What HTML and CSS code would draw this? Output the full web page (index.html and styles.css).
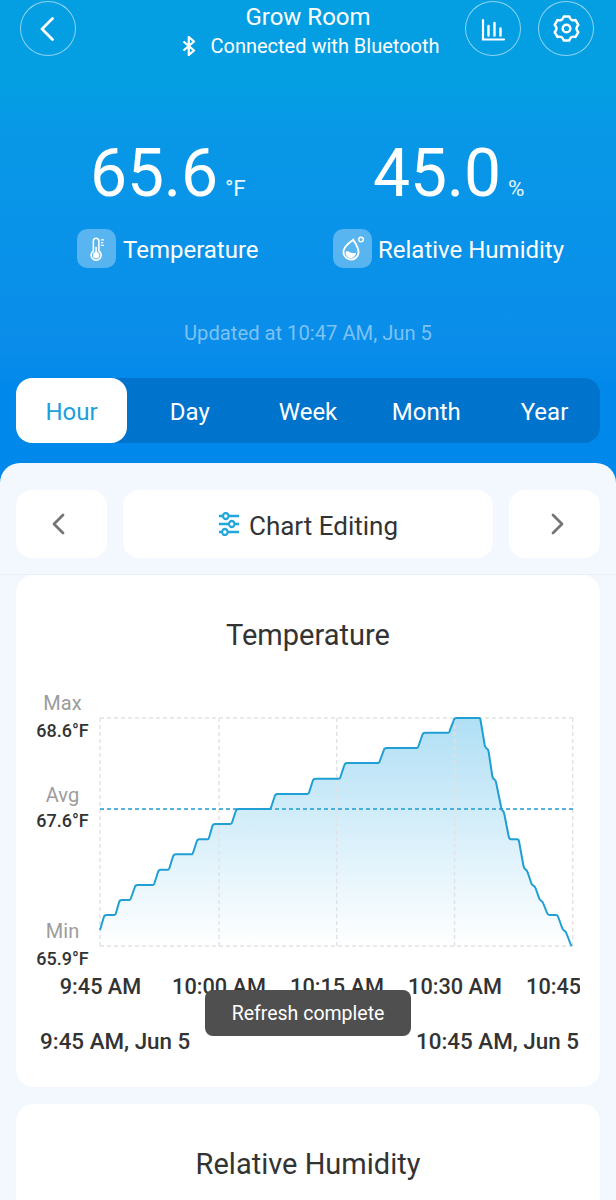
FILE: index.html
```html
<!DOCTYPE html>
<html lang="en">
<head>
<meta charset="utf-8">
<title>Grow Room</title>
<link rel="stylesheet" href="styles.css">
</head>
<body>
<div class="app">
  <header class="hero">
    <div class="topbar">
      <button class="round">
        <svg width="24" height="24" viewBox="0 0 24 24"><path d="M16.500 1.500 6 12l10.500 10.500" fill="none" stroke="#fff" stroke-width="2.800" stroke-linecap="round" stroke-linejoin="round"/></svg>
      </button>
      <div class="device">
        <div class="device-name">Grow Room</div>
        <div class="device-status">
          <svg width="14" height="20" viewBox="0 0 14 20"><path d="M1.500 5.500 12 14.500 6.800 19V1L12 5.500 1.500 14.500" fill="none" stroke="#fff" stroke-width="2.300" stroke-linejoin="round"/></svg>
          <span>Connected with Bluetooth</span>
        </div>
      </div>
      <div class="top-actions">
        <button class="round">
          <svg width="26" height="26" viewBox="0 0 26 26"><g fill="none" stroke="#fff" stroke-linecap="round"><path d="M3 4v19.500h21" stroke-width="2.200"/><path d="M8.500 10v9.500M14.500 7v12.500M20.500 12.500v7" stroke-width="2.400"/></g></svg>
        </button>
        <button class="round">
          <svg width="27" height="27" viewBox="0 0 24 24"><g fill="none" stroke="#fff" stroke-width="2.200" stroke-linejoin="round"><circle cx="12" cy="12" r="3.400"/><path d="M9.530 1.280H14.470Q15.600 5.760 20.040 4.500L22.520 8.780Q19.200 12 22.520 15.220L20.040 19.500Q15.600 18.240 14.470 22.720H9.530Q8.400 18.240 3.960 19.500L1.480 15.220Q4.800 12 1.480 8.780L3.960 4.500Q8.400 5.760 9.530 1.280z"/></g></svg>
        </button>
      </div>
    </div>

    <div class="readings">
      <div class="reading reading-temp">
        <div class="value"><span class="num">65.6</span><span class="unit">°F</span></div>
        <div class="label">
          <span class="tile"><svg width="19" height="24" viewBox="0 0 24 30"><g fill="none" stroke="#fff" stroke-width="2"><path d="M8 17.500V5a3.500 3.500 0 0 1 7 0v12.500a6.300 6.300 0 1 1-7 0z"/></g><circle cx="11.500" cy="22.800" r="4" fill="#fff"/><path d="M10.500 22V12h2v10z" fill="#fff"/><path d="M17.500 3.500h4M17.500 7h3M17.500 10.500h4" stroke="#fff" stroke-width="1.500"/></svg></span>
          <span class="label-text">Temperature</span>
        </div>
      </div>
      <div class="reading reading-hum">
        <div class="value"><span class="num">45.0</span><span class="unit">%</span></div>
        <div class="label">
          <span class="tile"><svg width="26" height="28" viewBox="0 0 26 28"><g transform="rotate(10 11 17)"><path d="M11 4.500C15 9 18.500 12 18.500 17a7.500 7.500 0 0 1-15 0C3.500 12 7 9 11 4.500z" fill="none" stroke="#fff" stroke-width="1.900"/><path d="M5.800 17.500c2.500-1.700 4.500.8 7 .3 1.300-.3 2.300-.8 3.400-1 0 3.500-2.300 6.300-5.200 6.300-3 0-5.200-2.500-5.200-5.600z" fill="#fff"/></g><circle cx="21" cy="4.500" r="2.300" fill="none" stroke="#fff" stroke-width="1.400"/></svg></span>
          <span class="label-text">Relative Humidity</span>
        </div>
      </div>
    </div>

    <div class="updated">Updated at 10:47 AM, Jun 5</div>

    <nav class="tabs">
      <span class="tab tab-active">Hour</span>
      <span class="tab">Day</span>
      <span class="tab">Week</span>
      <span class="tab">Month</span>
      <span class="tab">Year</span>
    </nav>
  </header>

  <main class="sheet">
    <div class="toolbar">
      <button class="tool tool-nav tool-prev"><svg width="16" height="24" viewBox="0 0 16 24"><path d="M13 3 4 12l9 9" fill="none" stroke="#757575" stroke-width="2.800" stroke-linecap="round" stroke-linejoin="round"/></svg></button>
      <button class="tool tool-main">
        <svg width="22" height="24" viewBox="0 0 24 24" preserveAspectRatio="none"><g fill="none" stroke="#21a6de" stroke-width="2.300"><path d="M1 4h4.500M11.500 4H23M1 12h11M18 12h5M1 20h3.500M10.500 20H23"/><circle cx="8.500" cy="4" r="3"/><circle cx="15" cy="12" r="3"/><circle cx="7.500" cy="20" r="3"/></g></svg>
        <span class="tool-text">Chart Editing</span>
      </button>
      <button class="tool tool-nav tool-next"><svg width="16" height="24" viewBox="0 0 16 24"><path d="M3 3l9 9-9 9" fill="none" stroke="#757575" stroke-width="2.800" stroke-linecap="round" stroke-linejoin="round"/></svg></button>
    </div>

    <section class="card card-first">
      <h2 class="card-title">Temperature</h2>
      <svg class="chart" width="564" height="324" viewBox="16 680 564 324">
        <defs>
          <linearGradient id="fill" x1="0" y1="718" x2="0" y2="946" gradientUnits="userSpaceOnUse">
            <stop offset="0" stop-color="#b0dff5"/>
            <stop offset="1" stop-color="#ffffff"/>
          </linearGradient>
        </defs>
        <path fill="url(#fill)" d="M100 930 105 915 115.700 915 120 900 130.700 900 135.700 885 154 885 159 869.700 169 869.700 174 854.300 192.700 854.300 197.700 839.300 208.700 839.300 213.300 824 231.700 824 236.700 809 270.700 809 275.700 794 308.700 794 313.700 778.700 340 778.700 345.300 763 379.300 763 384.700 748 418 748 423.300 732.700 449.300 732.700 454.700 718 480 718 485.300 748 488.300 750 492.700 778.700 495.700 781 501.700 809 504 812 509.300 839.300 518.700 839.300 524 869 527.300 871 531.700 885 535 887 539.300 900 542.700 902 548 915 557.700 915 562.700 930 566 932 571.700 946 100 946z"/>
        <g class="grid">
          <path d="M100 718H573M100 946H573M100 718V946M219 718V946M336.700 718V946M454.500 718V946M572.700 718V946"/>
        </g>
        <path class="avg" d="M100 809H573"/>
        <path class="line" d="M100 930 103.700 917.500Q104.300 915 106.500 915L114.500 915Q115.500 915 116 913L119 902.500Q119.700 900 121.700 900L129.500 900Q130.500 900 131 898L134.700 887.500Q135.300 885 137.500 885L153 885Q154 885 154.500 883L158 872Q158.700 869.700 160.700 869.700L168 869.700Q169 869.700 169.500 867.700L173 856.500Q173.700 854.300 175.700 854.300L191.500 854.300Q192.700 854.300 193.200 852.300L196.700 841.500Q197.300 839.300 199.500 839.300L207.500 839.300Q208.700 839.300 209.200 837.300L212.300 826.300Q213 824 215 824L230.500 824Q231.700 824 232.200 822L235.700 811.300Q236.300 809 238.500 809L269.500 809Q270.700 809 271.200 807L274.700 796.300Q275.300 794 277.500 794L307.500 794Q308.700 794 309.200 792L312.700 781Q313.300 778.700 315.500 778.700L339 778.700Q340 778.700 340.500 776.700L344.300 765.300Q345 763 347 763L378.300 763Q379.300 763 379.800 761L383.700 750.300Q384.300 748 386.500 748L417 748Q418 748 418.500 746L422.300 735Q423 732.700 425 732.700L448.300 732.700Q449.300 732.700 449.800 730.700L453.700 720.300Q454.300 718 456.500 718L479 718Q480.300 718 480.500 720L484.700 745Q485.300 748 487 748.700 488.300 749.500 488.700 752L492.300 776Q492.700 778.700 494.500 779.500 495.700 780.300 496.200 783L501.500 809Q502 810.500 503 811 504 812 504.300 814L508.700 836.500Q509.300 839.300 511 839.300L517 839.300Q518.700 839.300 519 841.300L523.500 866Q524 868.500 525.500 869.300 527 870.300 527.700 872.500L531.200 883Q531.700 885 533.500 885.700 535 886.700 535.700 888.500L539 897.800Q539.500 900 541 900.700 542.700 901.700 543.300 903.500L547 912.800Q547.700 915 549.500 915L556 915Q557.700 915 558.200 917L562 927.500Q562.700 930 564.200 930.700 566 931.700 566.700 934L570.700 944.500 571.700 946"/>
        <text class="ax-name" x="62.500" y="710">Max</text>
        <text class="ax-val" x="62.500" y="737">68.6°F</text>
        <text class="ax-name" x="62.500" y="802">Avg</text>
        <text class="ax-val" x="62.500" y="826.500">67.6°F</text>
        <text class="ax-name" x="62.500" y="938">Min</text>
        <text class="ax-val" x="62.500" y="964.500">65.9°F</text>
        <text class="ax-time" x="100.500" y="994">9:45 AM</text>
        <text class="ax-time" x="219" y="994">10:00 AM</text>
        <text class="ax-time" x="337" y="994">10:15 AM</text>
        <text class="ax-time" x="455" y="994">10:30 AM</text>
        <text class="ax-time" x="573" y="994">10:45 AM</text>
      </svg>
      <div class="range">
        <span>9:45 AM, Jun 5</span>
        <span>10:45 AM, Jun 5</span>
      </div>
    </section>

    <section class="card card-next">
      <h2 class="card-title">Relative Humidity</h2>
    </section>
  </main>

  <div class="toast">Refresh complete</div>
</div>
</body>
</html>
```
FILE: styles.css
```css
* { box-sizing: border-box; }
html, body { margin: 0; padding: 0; }
body { font-family: Roboto, "Liberation Sans", sans-serif; color: #333; background: #f2f8fd; }
button { font: inherit; color: inherit; background: none; border: 0; padding: 0; }
svg { display: block; }

.app { position: relative; width: 616px; height: 1200px; overflow: hidden; background: #f2f8fd; }

.hero { height: 483px; padding-top: 1px; background: linear-gradient(180deg, #049fe3 0%, #049ee3 18%, #0898e7 27%, #0a8dea 72%, #0088ea 80%); color: #fff; }

.topbar { display: flex; align-items: flex-start; justify-content: space-between; padding: 0 22px 0 20px; height: 56px; }
.round { width: 56px; height: 55px; border: 1px solid rgba(255,255,255,.55); border-radius: 50%; display: flex; align-items: center; justify-content: center; flex: none; }
.top-actions { display: flex; gap: 17px; }
.device { position: absolute; left: 0; right: 0; top: 0; text-align: center; }
.device-name { font-size: 24px; line-height: 26px; margin-top: 4px; }
.device-status { display: flex; align-items: center; justify-content: center; gap: 14px; font-size: 20px; line-height: 24px; margin-top: 4px; padding-left: 6px; }

.readings { display: flex; margin-top: 81px; height: 132px; }
.reading { flex: none; }
.reading-temp { margin-left: 77px; width: 256px; }
.reading-hum { width: 240px; }
.value { display: flex; align-items: baseline; height: 72px; line-height: 72px; }
.reading-temp .value { padding-left: 13px; }
.reading-hum .value { padding-left: 40px; }
.num { font-size: 66px; letter-spacing: -.2px; }
.unit { font-size: 22.500px; margin-left: 7px; opacity: .9; }
.label { display: flex; align-items: center; gap: 7px; font-size: 24px; margin-top: 19px; }
.reading-hum .label { gap: 6px; }
.label-text { padding-top: 2px; }
.tile { width: 39px; height: 39px; border-radius: 10px; background: rgba(255,255,255,.32); display: flex; align-items: center; justify-content: center; }

.updated { margin-top: 51px; text-align: center; font-size: 20.200px; line-height: 24px; color: rgba(255,255,255,.47); }

.tabs { display: flex; justify-content: space-between; margin: 33px 16px 0; height: 65px; border-radius: 16px; background: #0073cd; }
.tab { width: 111px; display: flex; align-items: center; justify-content: center; font-size: 24px; padding-top: 2px; }
.tab-active { background: #fff; color: #1ba0dc; border-radius: 16px; }

.sheet { position: absolute; left: 0; right: 0; top: 463px; bottom: 0; background: #f2f8fd; border-radius: 20px 20px 0 0; overflow: hidden; }
.toolbar { display: flex; gap: 16px; padding: 27px 16px 17px; border-bottom: 1px solid #e9eff4; height: 112px; }
.tool { height: 68px; background: #fff; border-radius: 16px; display: flex; align-items: center; justify-content: center; font-size: 26px; color: #333; }
.tool-nav { width: 91px; }
.tool-prev { padding-right: 7px; }
.tool-next { padding-left: 7px; }
.tool-main { flex: 1; gap: 9px; }
.tool-text { padding-top: 3px; }

.card { margin: 0 16px; background: #fff; border-radius: 18px; }
.card-first { height: 512px; }
.card-next { margin-top: 17px; height: 200px; }
.card-title { margin: 0; padding-top: 43px; text-align: center; font-size: 29px; line-height: 34px; font-weight: 400; color: #333; }

.chart { margin-top: 28px; }
.grid path { fill: none; stroke: #e0e2e6; stroke-width: 1.400; stroke-dasharray: 4 3; }
.avg { fill: none; stroke: #1f9bd1; stroke-width: 1.600; stroke-dasharray: 4 3; }
.line { fill: none; stroke: #1f9fd3; stroke-width: 2; stroke-linejoin: round; }
.ax-name { font-size: 20px; fill: #9c9c9c; text-anchor: middle; }
.ax-val { font-size: 18px; font-weight: 500; fill: #333; text-anchor: middle; }
.ax-time { font-size: 21.700px; font-weight: 500; fill: #333; text-anchor: middle; }

.range { display: flex; justify-content: space-between; padding: 25px 21px 0 24px; margin-top: -1px; font-size: 22.400px; font-weight: 500; color: #333; line-height: 26px; }

.toast { position: absolute; left: 205px; top: 990px; width: 206px; height: 46px; border-radius: 8px; background: #4f4f4f; color: #fff; font-size: 19.500px; display: flex; align-items: center; justify-content: center; }
```
